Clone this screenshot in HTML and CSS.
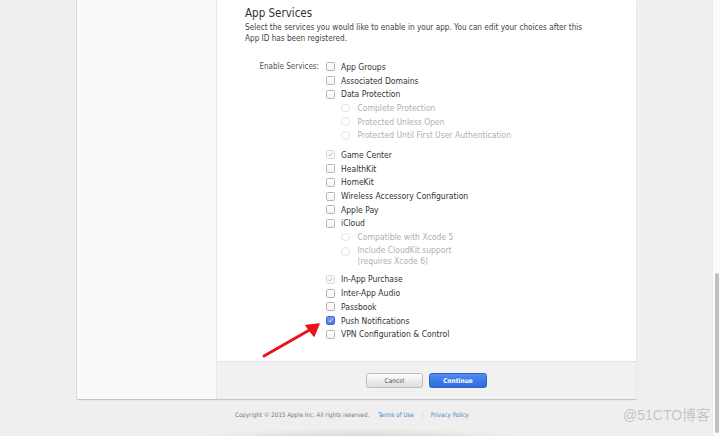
FILE: index.html
```html
<!DOCTYPE html>
<html>
<head>
<meta charset="utf-8">
<link rel="stylesheet" href="styles.css">
</head>
<body>
<div class="viewport">
  <div class="page">
    <div class="card">
      <aside class="sidebar"></aside>
      <main class="main">
        <section class="content">
          <h2 class="title">App Services</h2>
          <p class="desc">Select the services you would like to enable in your app. You can edit your choices after this App ID has been registered.</p>
          <div class="form">
            <div class="form-label">Enable Services:</div>
            <div class="options">
              <div class="row"><span class="cb"></span><span>App Groups</span></div>
              <div class="row"><span class="cb"></span><span>Associated Domains</span></div>
              <div class="row"><span class="cb"></span><span>Data Protection</span></div>
              <div class="group">
                <div class="row sub"><span class="rd"></span><span>Complete Protection</span></div>
                <div class="row sub"><span class="rd"></span><span>Protected Unless Open</span></div>
                <div class="row sub"><span class="rd"></span><span>Protected Until First User Authentication</span></div>
              </div>
              <div class="row"><span class="cb cb-locked"><svg viewBox="0 0 8 8"><path d="M1.8 4.2 L3.3 5.8 L6.3 2.2" fill="none" stroke="#a8a8a8" stroke-width="0.9"/></svg></span><span>Game Center</span></div>
              <div class="row"><span class="cb"></span><span>HealthKit</span></div>
              <div class="row"><span class="cb"></span><span>HomeKit</span></div>
              <div class="row"><span class="cb"></span><span>Wireless Accessory Configuration</span></div>
              <div class="row"><span class="cb"></span><span>Apple Pay</span></div>
              <div class="row"><span class="cb"></span><span>iCloud</span></div>
              <div class="group">
                <div class="row sub"><span class="rd"></span><span>Compatible with Xcode 5</span></div>
                <div class="row sub wrap"><span class="rd"></span><span class="wrap-text">Include CloudKit support<br>(requires Xcode 6)</span></div>
              </div>
              <div class="row"><span class="cb cb-locked"><svg viewBox="0 0 8 8"><path d="M1.8 4.2 L3.3 5.8 L6.3 2.2" fill="none" stroke="#a8a8a8" stroke-width="0.9"/></svg></span><span>In-App Purchase</span></div>
              <div class="row"><span class="cb"></span><span>Inter-App Audio</span></div>
              <div class="row"><span class="cb"></span><span>Passbook</span></div>
              <div class="row"><span class="cb cb-on"><svg viewBox="0 0 8 8"><path d="M1.8 4.2 L3.3 5.8 L6.3 2.2" fill="none" stroke="#ffffff" stroke-width="1"/></svg></span><span>Push Notifications</span></div>
              <div class="row"><span class="cb"></span><span>VPN Configuration &amp; Control</span></div>
            </div>
          </div>
        </section>
        <div class="actions">
          <button class="btn btn-cancel">Cancel</button>
          <button class="btn btn-primary">Continue</button>
        </div>
      </main>
    </div>
    <footer class="site-footer">
      <span class="copy">Copyright © 2015 Apple Inc. All rights reserved.</span>
      <a class="flink">Terms of Use</a>
      <span class="sep">|</span>
      <a class="flink">Privacy Policy</a>
    </footer>
    <div class="bottom-shade"></div>
    <svg class="arrow" viewBox="0 0 70 45" width="70" height="45">
      <path d="M7 38 L56 10" stroke="#e8141b" stroke-width="3" stroke-linecap="round" fill="none"/>
      <path d="M62 6 L49 7.5 L57 18 Z" fill="#e8141b" stroke="#e8141b" stroke-width="1.5" stroke-linejoin="round"/>
    </svg>
  </div>
  <div class="scrollbar"><div class="thumb"></div></div>
  <div class="watermark">@51CTO博客</div>
</div>
</body>
</html>
```
FILE: styles.css
```css
html, body {
  margin: 0;
  padding: 0;
}
body {
  background: #efefef;
  font-family: "DejaVu Sans Condensed", "DejaVu Sans", sans-serif;
  color: #333;
  width: 720px;
  height: 436px;
  overflow: hidden;
}
.viewport {
  position: relative;
  display: flex;
  width: 720px;
  height: 436px;
}
.page {
  position: relative;
  flex: 1;
  height: 436px;
  overflow: hidden;
}
.card {
  display: flex;
  margin-left: 77px;
  width: 559px;
  background: #fff;
  box-shadow: 0 1px 1px rgba(0,0,0,0.18), -1px 0 0 rgba(0,0,0,0.05);
}
.sidebar {
  width: 139px;
  background: #f9f9f9;
  border-right: 1px solid #e6e6e6;
}
.main {
  flex: 1;
  display: flex;
  flex-direction: column;
}
.content {
  padding: 6px 0 20px 28px;
}
.title {
  margin: 0;
  font-weight: normal;
  font-size: 11.5px;
  line-height: 14px;
  color: #333;
}
.desc {
  margin: 1.5px 0 0;
  font-size: 8.15px;
  line-height: 11px;
  width: 352px;
  color: #444;
}
.form {
  display: flex;
  margin-top: 16.5px;
  font-size: 8px;
}
.form-label {
  width: 74px;
  text-align: right;
  line-height: 13.7px;
  color: #555;
  margin-right: 7px;
}
.options {
  display: flex;
  flex-direction: column;
  font-size: 8.5px;
}
.row {
  display: flex;
  align-items: center;
  height: 13.7px;
  color: #333;
}
.cb {
  width: 7px;
  height: 7px;
  border: 0.7px solid #b4b4b4;
  border-radius: 1.5px;
  background: linear-gradient(#ffffff, #f3f3f3);
  margin-right: 6px;
  display: flex;
  flex-shrink: 0;
}
.cb svg {
  width: 100%;
  height: 100%;
}
.cb-locked {
  border-color: #d8d8d8;
  background: #fafafa;
}
.cb-on {
  border-color: #4a62d8;
  background: linear-gradient(#7a95f5, #4f6ee8);
}
.sub {
  color: #b0b0b0;
  padding-left: 15px;
}
.rd {
  width: 6.5px;
  height: 6.5px;
  border: 0.7px solid #e4e4e4;
  border-radius: 50%;
  margin-right: 8px;
  flex-shrink: 0;
  background: #fff;
}
.group {
  margin-bottom: 6px;
}
.row.wrap {
  height: auto;
  align-items: flex-start;
  padding-top: 1.5px;
}
.row.wrap .rd {
  margin-top: 1.6px;
}
.wrap-text {
  line-height: 10.6px;
}
.actions {
  height: 38px;
  background: #f1f1f1;
  border-top: 1px solid #e4e4e4;
  display: flex;
  justify-content: center;
  align-items: center;
  gap: 6px;
  box-sizing: border-box;
}
.btn {
  font-family: inherit;
  font-size: 6.5px;
  height: 15px;
  border-radius: 2.5px;
  padding: 0;
  margin: 0;
}
.btn-cancel {
  width: 57px;
  color: #555;
  border: 1px solid #bdbdbd;
  background: linear-gradient(#fdfdfd, #dedede);
}
.btn-primary {
  width: 58px;
  color: #fff;
  font-weight: bold;
  border: 1px solid #2f62c8;
  background: linear-gradient(#4f8cee, #2d6bdc);
}
.site-footer {
  display: flex;
  align-items: center;
  margin: 10px 0 0 235px;
  font-size: 6.2px;
  line-height: 12px;
  color: #777;
}
.flink {
  color: #3b84c8;
  margin-left: 9px;
}
.sep {
  color: #d0d0d0;
  margin-left: 8px;
}
.sep + .flink {
  margin-left: 7px;
}
.bottom-shade {
  position: absolute;
  left: 180px;
  top: 428px;
  width: 360px;
  height: 12px;
  background: radial-gradient(ellipse at 50% 100%, rgba(0,0,0,0.13), rgba(0,0,0,0) 70%);
}
.watermark {
  position: absolute;
  left: 623px;
  top: 405px;
  font-family: "Liberation Sans", "Noto Sans CJK SC", sans-serif;
  font-size: 14px;
  line-height: 20px;
  color: rgba(160,160,160,0.55);
  white-space: nowrap;
}
.arrow {
  position: absolute;
  left: 257px;
  top: 318px;
}
.scrollbar {
  width: 8px;
  height: 436px;
  background: #fafafa;
  border-left: 1px solid #ececec;
  box-sizing: border-box;
  position: relative;
}
.thumb {
  position: absolute;
  left: 1.5px;
  top: 273px;
  width: 4.5px;
  height: 160px;
  border-radius: 3px;
  background: #c1c1c1;
}
```
